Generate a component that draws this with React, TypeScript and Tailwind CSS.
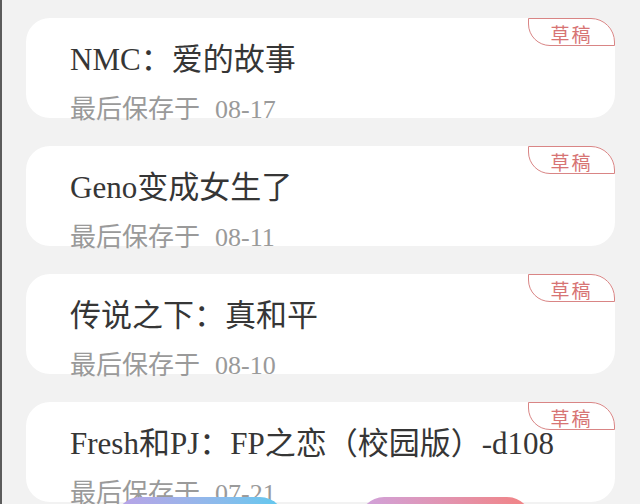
const drafts = [
  { title: "NMC：爱的故事", saved: "08-17" },
  { title: "Geno变成女生了", saved: "08-11" },
  { title: "传说之下：真和平", saved: "08-10" },
  { title: "Fresh和PJ：FP之恋（校园版）-d108", saved: "07-21" },
];

const font = "font-['Liberation_Serif','Noto_Sans_CJK_SC',serif]";

function DraftCard({ title, saved }: { title: string; saved: string }) {
  return (
    <div className="relative h-[100px] shrink-0 rounded-[24px] bg-white pl-[44px] pt-[22px]">
      {/* draft tag */}
      <div className="absolute right-0 top-0 flex h-[28px] w-[87px] items-center justify-center rounded-bl-[22px] rounded-tr-[24px] border-[1.5px] border-[#d98585] pt-[3px]">
        <span className="font-['Noto_Sans_CJK_SC',sans-serif] text-[19px] leading-none tracking-[2px] text-[#d77474]">
          草稿
        </span>
      </div>
      <div className={`${font} text-[31px] leading-[40px] text-[#363636]`}>{title}</div>
      <div className={`${font} mt-[15px] text-[26px] leading-[30px] text-[#9a9a9a]`}>
        最后保存于<span className="ml-[15px]">{saved}</span>
      </div>
    </div>
  );
}

export default function App() {
  return (
    <div className="relative h-[504px] w-[640px] overflow-hidden border-l-2 border-[#5c5c5c] bg-[#f2f2f2]">
      <div className="flex flex-col gap-[28px] pl-[24px] pr-[25px] pt-[18px]">
        {drafts.map((d) => (
          <DraftCard key={d.title} {...d} />
        ))}
      </div>

      {/* bottom action buttons */}
      <div className="absolute left-0 right-0 top-[497px] flex">
        <div className="ml-[113px] h-[50px] w-[170px] rounded-full bg-gradient-to-r from-[#b9a2e6] to-[#5cc9ef]" />
        <div className="ml-[74px] h-[50px] w-[173px] rounded-full bg-gradient-to-r from-[#cfa2dc] to-[#f28282]" />
      </div>
    </div>
  );
}
